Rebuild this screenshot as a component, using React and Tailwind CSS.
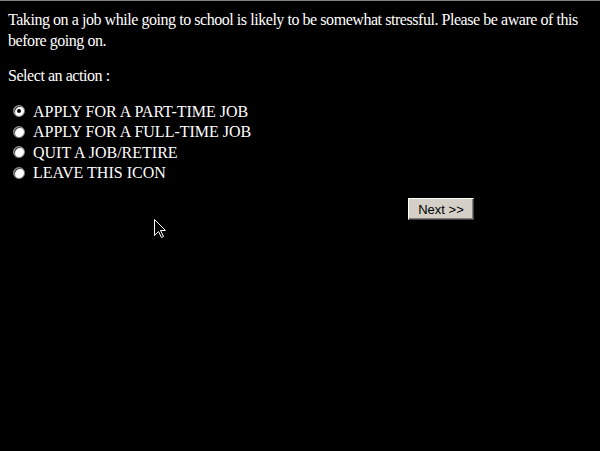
const options = [
  "APPLY FOR A PART-TIME JOB",
  "APPLY FOR A FULL-TIME JOB",
  "QUIT A JOB/RETIRE",
  "LEAVE THIS ICON",
];

function Radio({ checked }) {
  return (
    <span className="relative inline-block w-[12px] h-[12px] rounded-full bg-white border border-[#808080] shadow-[inset_1px_1px_0_#404040]">
      {checked && (
        <span className="absolute left-[3px] top-[3px] w-[4px] h-[4px] rounded-full bg-black" />
      )}
    </span>
  );
}

export default function App() {
  return (
    <div className="relative w-[600px] h-[451px] bg-black text-white border-t border-[#808080] overflow-hidden font-['Liberation_Serif',serif] text-[16px] leading-[21px]">
      <div className="pl-[8px] pt-[8px] pr-[6px]">
        <p className="tracking-[-0.45px]">
          Taking on a job while going to school is likely to be somewhat stressful. Please be aware of this before going on.
        </p>
        <p className="mt-[14px] tracking-[-0.45px]">Select an action :</p>
        <div className="mt-[15px] flex flex-col">
          {options.map((o, i) => (
            <label key={o} className="flex items-center h-[20.5px] pl-[5px]">
              <Radio checked={i === 0} />
              <span className="ml-[8px]">{o}</span>
            </label>
          ))}
        </div>
        <div className="flex justify-end pr-[120px] mt-[15px]">
          <button className="w-[66px] h-[22px] bg-[#d4d0c8] text-black font-['Liberation_Sans',sans-serif] text-[13px] leading-none border border-t-white border-l-white border-r-[#404040] border-b-[#404040] shadow-[inset_-1px_-1px_0_#808080]">
            Next &gt;&gt;
          </button>
        </div>
      </div>
      <svg className="absolute left-[154px] top-[218px]" width="12" height="20" viewBox="0 0 12 20">
        <path d="M0.5 0.5 L0.5 16.5 L4.5 12.5 L7.5 18.5 L9.5 17.5 L6.5 11.5 L11.5 11.5 Z" fill="black" stroke="white" strokeWidth="1" />
      </svg>
    </div>
  );
}
